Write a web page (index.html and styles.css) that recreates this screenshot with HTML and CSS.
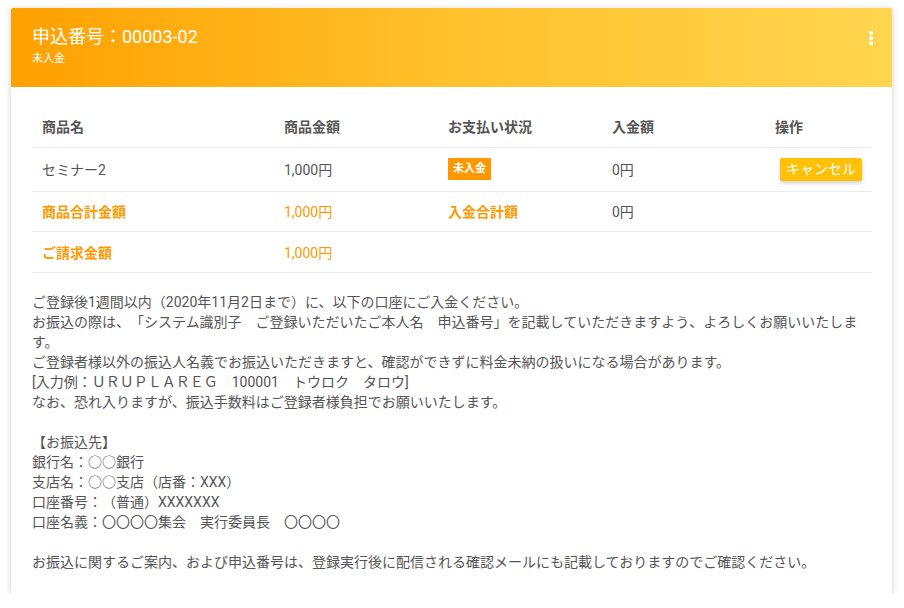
FILE: index.html
```html
<!DOCTYPE html>
<html lang="ja">
<head>
    <meta charset="UTF-8">
    <title>申込詳細</title>
    <link rel="stylesheet" href="styles.css">
</head>
<body>
    <div class="order-card">
        <!-- ヘッダー -->
        <div class="order-head">
            <div class="head-text">
                <h1>申込番号：00003-02</h1>
                <div class="head-sub">未入金</div>
            </div>
            <div class="kebab">
                <svg width="6" height="14" viewBox="0 0 6 14">
                    <rect x="1" y="0" width="4" height="3.4" rx="1" fill="#fff"/>
                    <rect x="1" y="5.3" width="4" height="3.4" rx="1" fill="#fff"/>
                    <rect x="1" y="10.6" width="4" height="3.4" rx="1" fill="#fff"/>
                </svg>
            </div>
        </div>

        <div class="order-body">
            <table class="order-table">
                <colgroup>
                    <col style="width: 242px">
                    <col style="width: 164px">
                    <col style="width: 164px">
                    <col style="width: 163px">
                    <col>
                </colgroup>
                <thead>
                    <tr>
                        <th>商品名</th>
                        <th>商品金額</th>
                        <th>お支払い状況</th>
                        <th>入金額</th>
                        <th>操作</th>
                    </tr>
                </thead>
                <tbody>
                    <tr class="item-row">
                        <td>セミナー2</td>
                        <td>1,000円</td>
                        <td><span class="badge">未入金</span></td>
                        <td>0円</td>
                        <td><button class="cancel-btn">キャンセル</button></td>
                    </tr>
                    <tr class="sum-row">
                        <td class="accent bold">商品合計金額</td>
                        <td class="accent">1,000円</td>
                        <td class="accent bold">入金合計額</td>
                        <td>0円</td>
                        <td></td>
                    </tr>
                    <tr>
                        <td class="accent bold">ご請求金額</td>
                        <td class="accent">1,000円</td>
                        <td></td>
                        <td></td>
                        <td></td>
                    </tr>
                </tbody>
            </table>

            <div class="notice">
                <p>ご登録後1週間以内（2020年11月2日まで）に、以下の口座にご入金ください。<br>
                お振込の際は、「システム識別子　ご登録いただいたご本人名　申込番号」を記載していただきますよう、よろしくお願いいたします。<br>
                ご登録者様以外の振込人名義でお振込いただきますと、確認ができずに料金未納の扱いになる場合があります。<br>
                [入力例：ＵＲＵＰＬＡＲＥＧ　100001　トウロク　タロウ]<br>
                なお、恐れ入りますが、振込手数料はご登録者様負担でお願いいたします。</p>

                <p>【お振込先】<br>
                銀行名：○○銀行<br>
                支店名：○○支店（店番：XXX）<br>
                口座番号：（普通）XXXXXXX<br>
                口座名義：〇〇〇〇集会　実行委員長　〇〇〇〇</p>

                <p>お振込に関するご案内、および申込番号は、登録実行後に配信される確認メールにも記載しておりますのでご確認ください。</p>
            </div>
        </div>
    </div>
</body>
</html>
```

FILE: styles.css
```css
* {
    margin: 0;
    padding: 0;
    box-sizing: border-box;
}

body {
    font-family: Roboto, "Noto Sans CJK JP", sans-serif;
    background: #fff;
    color: #555;
    padding: 8px 12px 0 11px;
    text-spacing-trim: space-all;
}

.order-card {
    width: 881px;
    background: #fff;
    border-radius: 2px;
    box-shadow: 0 1px 6px rgba(0,0,0,0.2);
    overflow: hidden;
}

.order-head {
    height: 79px;
    display: flex;
    justify-content: space-between;
    align-items: flex-start;
    padding: 17px 18px 0 21px;
    background: linear-gradient(90deg, #ffa000 0%, #ffc12c 50%, #ffd54f 100%);
    color: #fff;
}

.order-head h1 {
    font-size: 18px;
    font-weight: 400;
    line-height: 24px;
}

.head-sub {
    font-size: 11px;
    line-height: 16px;
    margin-top: 2px;
}

.kebab {
    margin-top: 6px;
    display: flex;
}

.order-body {
    padding: 18px 20px 22px 21px;
}

.order-table {
    width: 840px;
    border-collapse: collapse;
    table-layout: fixed;
    font-size: 14px;
}

.order-table th,
.order-table td {
    text-align: left;
    padding: 0 10px;
    height: 41px;
    border-bottom: 1px solid #ebebeb;
    vertical-align: middle;
}

.order-table th {
    font-weight: 700;
    color: #555;
    height: 42px;
}

.order-table .item-row td {
    height: 44px;
}

.order-table .sum-row td {
    height: 40px;
}

.accent {
    color: #ff9800;
}

.bold {
    font-weight: 700;
}

.badge {
    display: inline-block;
    background: #ff9800;
    color: #fff;
    font-size: 11px;
    font-weight: 700;
    line-height: 22px;
    padding: 0 5px;
}

.cancel-btn {
    font-family: inherit;
    font-size: 14px;
    color: #fff;
    background: #ffc107;
    border: none;
    border-radius: 2px;
    line-height: 23px;
    padding: 0 6px;
    margin-left: 5px;
    box-shadow: 0 2px 4px rgba(0,0,0,0.2);
}

.notice {
    margin-top: 19px;
    font-size: 14px;
    line-height: 20px;
    color: #555;
}

.notice p {
    margin-bottom: 20px;
}

.notice p:last-child {
    margin-bottom: 0;
}
```
